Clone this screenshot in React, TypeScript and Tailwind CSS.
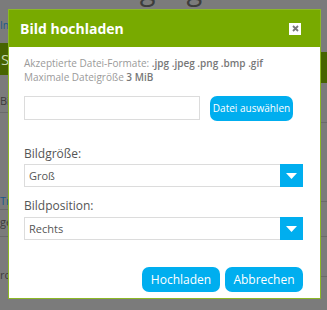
import React from 'react';

const font = { fontFamily: '"Open Sans", "Liberation Sans", sans-serif' };

const Select = ({ value }: { value: string }) => (
  <div className="flex h-[23px] border border-[#dcdcdc] bg-white">
    <div className="flex-1 pl-[4px] text-[11px] leading-[21px] text-[#555]">{value}</div>
    <div className="flex w-[23px] items-center justify-center bg-[#00aeef] -my-px -mr-px">
      <svg width="11" height="6" viewBox="0 0 11 6">
        <path d="M0 0 H11 L5.5 6 Z" fill="#fff" />
      </svg>
    </div>
  </div>
);

const App: React.FC = () => {
  return (
    <div className="relative h-[310px] w-[327px] overflow-hidden bg-[#7b7b7b]" style={font}>
      {/* page behind the overlay */}
      <div className="-mt-[29px] whitespace-nowrap pr-[88px] text-right text-[29px] leading-[36px] text-[#3d3d3d]">
        Darstellung eigener Beispiele
      </div>
      <div className="flex">
        <div className="w-[160px]">
          <div className="mt-[13px] h-[10px] text-[10px] leading-[10px] text-[#1a5a8a]">Info www</div>
          <div className="mt-[13px] h-[32px] bg-[#476400] pl-[1px] text-[15px] leading-[32px] text-[#c8d8b0]">Sp</div>
          <div className="h-[38px] border-b border-[#6a6a6a] pt-[18px] text-[11px] text-[#3d3d3d]">Bildgalerie</div>
          <div className="h-[97px] border-b border-[#6a6a6a] pt-[80px] text-[11px] text-[#1a5a8a]">Tm</div>
          <div className="h-[27px] border-b border-[#6a6a6a] pt-[4px] text-[11px] text-[#3d3d3d]">ge</div>
          <div className="h-[43px] pt-[30px] text-[11px] text-[#3d3d3d]">rc</div>
        </div>
        <div className="flex-1">
          <div className="mt-[45px] h-[31px] bg-[#476400]" />
          <div className="h-[40px] border-b border-[#6a6a6a]" />
          <div className="h-[79px] border-b border-[#6a6a6a]" />
          <div className="h-[35px] border-b border-[#6a6a6a]" />
          <div className="h-[40px] border-b border-[#6a6a6a]" />
        </div>
      </div>

      {/* modal */}
      <div className="absolute left-[8px] top-[9px] w-[313px] border border-[#8cb826] bg-white">
        <div className="flex h-[37px] items-center justify-between bg-[#78aa00] pl-[11px] pr-[19px]">
          <span className="text-[14px] font-bold text-white">Bild hochladen</span>
          <span className="flex h-[12px] w-[12px] items-center justify-center bg-white">
            <svg width="7" height="7" viewBox="0 0 7 7">
              <path d="M1 1 L6 6 M6 1 L1 6" stroke="#777" strokeWidth="1.8" />
            </svg>
          </span>
        </div>
        <div className="pb-[6px] pl-[15px] pr-[17px] pt-[9px]">
          <div className="text-[10px] leading-[14px] text-[#9a9a9a]">
            Akzeptierte Datei-Formate: <span className="font-semibold text-[#777]">.jpg .jpeg .png .bmp .gif</span>
          </div>
          <div className="text-[10px] leading-[14px] text-[#9a9a9a]">
            Maximale Dateigröße <span className="font-semibold text-[#777]">3 MiB</span>
          </div>
          <div className="mt-[12px] flex items-start gap-[10px]">
            <div className="h-[24px] w-[176px] border border-[#dcdcdc]" />
            <button className="h-[25px] w-[83px] rounded-[7px] bg-[#00aeef] text-[10px] text-white">
              Datei auswählen
            </button>
          </div>
          <div className="mt-[25px] mb-[2px] text-[12px] leading-[16px] text-[#555]">Bildgröße:</div>
          <Select value="Groß" />
          <div className="mt-[11px] mb-[3px] text-[12px] leading-[16px] text-[#555]">Bildposition:</div>
          <Select value="Rechts" />
          <div className="mt-[27px] flex justify-end gap-[5px]">
            <button className="h-[25px] w-[78px] rounded-[7px] bg-[#00aeef] text-[12px] text-white">Hochladen</button>
            <button className="h-[25px] w-[78px] rounded-[7px] bg-[#00aeef] text-[12px] text-white">Abbrechen</button>
          </div>
        </div>
      </div>
    </div>
  );
};

export default App;
